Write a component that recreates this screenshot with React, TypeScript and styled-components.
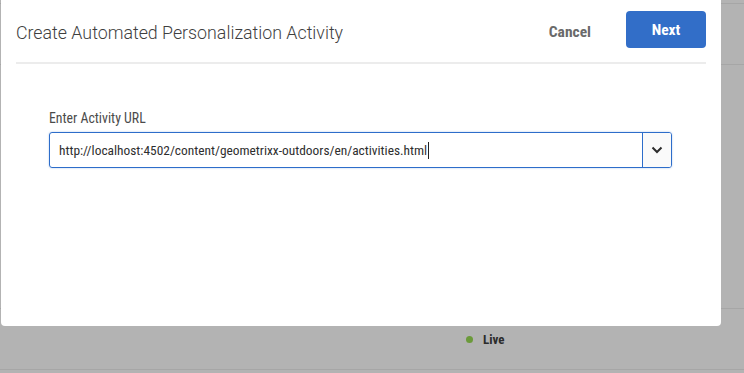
import React from "react";
import styled, { createGlobalStyle } from "styled-components";

const Global = createGlobalStyle`
  html, body { margin: 0; padding: 0; }
  body {
    width: 744px; height: 373px; overflow: hidden;
    background: #b3b3b3;
    font-family: "Roboto Condensed", "Liberation Sans", sans-serif;
  }
`;

const Page = styled.div`
  position: relative;
  width: 744px;
  height: 373px;
  overflow: hidden;
`;

const BgList = styled.div`
  display: flex;
  flex-direction: column;
  padding-top: 3px;
`;

const BgRow = styled.div<{ $h: number }>`
  height: ${(p) => p.$h}px;
  flex-shrink: 0;
  border-top: 1px solid #a6a6a6;
  display: flex;
  align-items: center;
  padding-left: 466px;
  box-sizing: border-box;
`;

const Status = styled.div`
  display: flex;
  align-items: center;
  gap: 10px;
  font-size: 13px;
  font-weight: 700;
  color: #2c2c2c;
  margin-top: 1px;
`;

const Dot = styled.span`
  width: 7px;
  height: 7px;
  border-radius: 50%;
  background: #6b9a3a;
`;

const Dialog = styled.div`
  position: absolute;
  left: 1px;
  top: 0;
  width: 720px;
  height: 326px;
  background: #fff;
  border-radius: 0 0 4px 4px;
  box-sizing: border-box;
  padding: 0 15px;
  display: flex;
  flex-direction: column;
`;

const Header = styled.div`
  height: 62px;
  display: flex;
  align-items: center;
  border-bottom: 2px solid #ececec;
`;

const Title = styled.h1`
  margin: 0;
  flex: 1;
  font-family: "Roboto", sans-serif;
  font-size: 17.8px;
  font-weight: 300;
  color: #3f3f3f;
  margin-top: 2px;
`;

const CancelBtn = styled.button`
  border: none;
  background: none;
  font-family: inherit;
  font-size: 15.5px;
  font-weight: 700;
  color: #6a6a6a;
  padding: 0;
  margin-right: 35px;
  margin-top: 1px;
`;

const NextBtn = styled.button`
  width: 80px;
  height: 37px;
  border: none;
  border-radius: 4px;
  background: #326ec8;
  color: #fff;
  font-family: inherit;
  font-size: 15.5px;
  font-weight: 700;
  margin-top: -3px;
`;

const Body = styled.div`
  padding: 46px 33px 0;
  display: flex;
  flex-direction: column;
`;

const Label = styled.label`
  font-size: 13.8px;
  color: #4b4b4b;
  margin-bottom: 6px;
`;

const Combo = styled.div`
  width: 623px;
  height: 36px;
  border: 1px solid #2d6dca;
  border-radius: 3px;
  box-sizing: border-box;
  display: flex;
  box-shadow: 0 0 2px rgba(45, 109, 202, 0.4);
`;

const UrlText = styled.div`
  flex: 1;
  display: flex;
  align-items: center;
  padding-left: 9px;
  font-size: 13.4px;
  color: #2e2e2e;
`;

const Caret = styled.span`
  width: 1px;
  height: 17px;
  background: #222;
  margin-left: 1px;
`;

const DropBtn = styled.div`
  width: 28px;
  border-left: 1px solid #2d6dca;
  background: #fafafa;
  border-radius: 0 2px 2px 0;
  display: flex;
  align-items: center;
  justify-content: center;
`;

export default function App() {
  return (
    <Page>
      <Global />
      <BgList>
        <BgRow $h={61} />
        <BgRow $h={244} />
        <BgRow $h={61}>
          <Status>
            <Dot />
            Live
          </Status>
        </BgRow>
        <BgRow $h={61} />
      </BgList>
      <Dialog>
        <Header>
          <Title>Create Automated Personalization Activity</Title>
          <CancelBtn>Cancel</CancelBtn>
          <NextBtn>Next</NextBtn>
        </Header>
        <Body>
          <Label>Enter Activity URL</Label>
          <Combo>
            <UrlText>
              http://localhost:4502/content/geometrixx-outdoors/en/activities.html
              <Caret />
            </UrlText>
            <DropBtn>
              <svg width="12" height="8" viewBox="0 0 12 8">
                <path d="M1.5 1.5 L6 6 L10.5 1.5" fill="none" stroke="#2c2c2c" strokeWidth="2" />
              </svg>
            </DropBtn>
          </Combo>
        </Body>
      </Dialog>
    </Page>
  );
}
